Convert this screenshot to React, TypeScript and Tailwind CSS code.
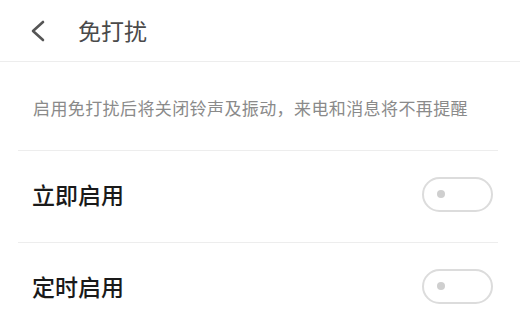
import React, { useState } from 'react';

const Toggle: React.FC<{ on: boolean; onClick: () => void }> = ({ on, onClick }) => (
  <button
    onClick={onClick}
    className={`relative w-[71px] h-[35px] rounded-full border-2 ${on ? 'border-[#2f8cff] bg-[#2f8cff]' : 'border-[#dcdcdc] bg-white'}`}
  >
    <span
      className={`absolute top-1/2 -translate-y-1/2 w-[8px] h-[8px] rounded-full ${on ? 'right-[14px] bg-white' : 'left-[13px] bg-[#cfcfcf]'}`}
    />
  </button>
);

const App: React.FC = () => {
  const [now, setNow] = useState(false);
  const [timed, setTimed] = useState(false);

  const rows = [
    { label: '立即启用', on: now, toggle: () => setNow(v => !v) },
    { label: '定时启用', on: timed, toggle: () => setTimed(v => !v) },
  ];

  return (
    <div
      className="w-[520px] h-[333px] bg-white overflow-hidden"
      style={{ fontFamily: '"Noto Sans CJK SC", "Noto Sans", sans-serif' }}
    >
      {/* Header */}
      <div className="h-[62px] flex items-center border-b border-[#ededed]">
        <button className="ml-[28px] w-[20px] h-[24px] flex items-center justify-center">
          <svg width="16" height="22" viewBox="0 0 16 22" fill="none">
            <path d="M13 2 L3 11 L13 20" stroke="#555" strokeWidth="2.6" strokeLinecap="round" strokeLinejoin="round" />
          </svg>
        </button>
        <h1 className="ml-[30px] text-[23px] text-[#4a4a4a] leading-none">免打扰</h1>
      </div>

      {/* Description */}
      <div className="h-[88px] flex items-center pl-[33px] pt-[2px]">
        <p className="text-[17px] text-[#8a8a8a] leading-none tracking-[0.4px]">
          启用免打扰后将关闭铃声及振动，来电和消息将不再提醒
        </p>
      </div>

      {rows.map(row => (
        <div key={row.label}>
          <div className="ml-[18px] mr-[22px] h-px bg-[#ededed]" />
          <div className="h-[91px] flex items-center justify-between pl-[32px] pr-[27px] pb-[5px]">
            <span className="text-[23px] font-medium text-[#1a1a1a] leading-none">{row.label}</span>
            <Toggle on={row.on} onClick={row.toggle} />
          </div>
        </div>
      ))}
    </div>
  );
};

export default App;
